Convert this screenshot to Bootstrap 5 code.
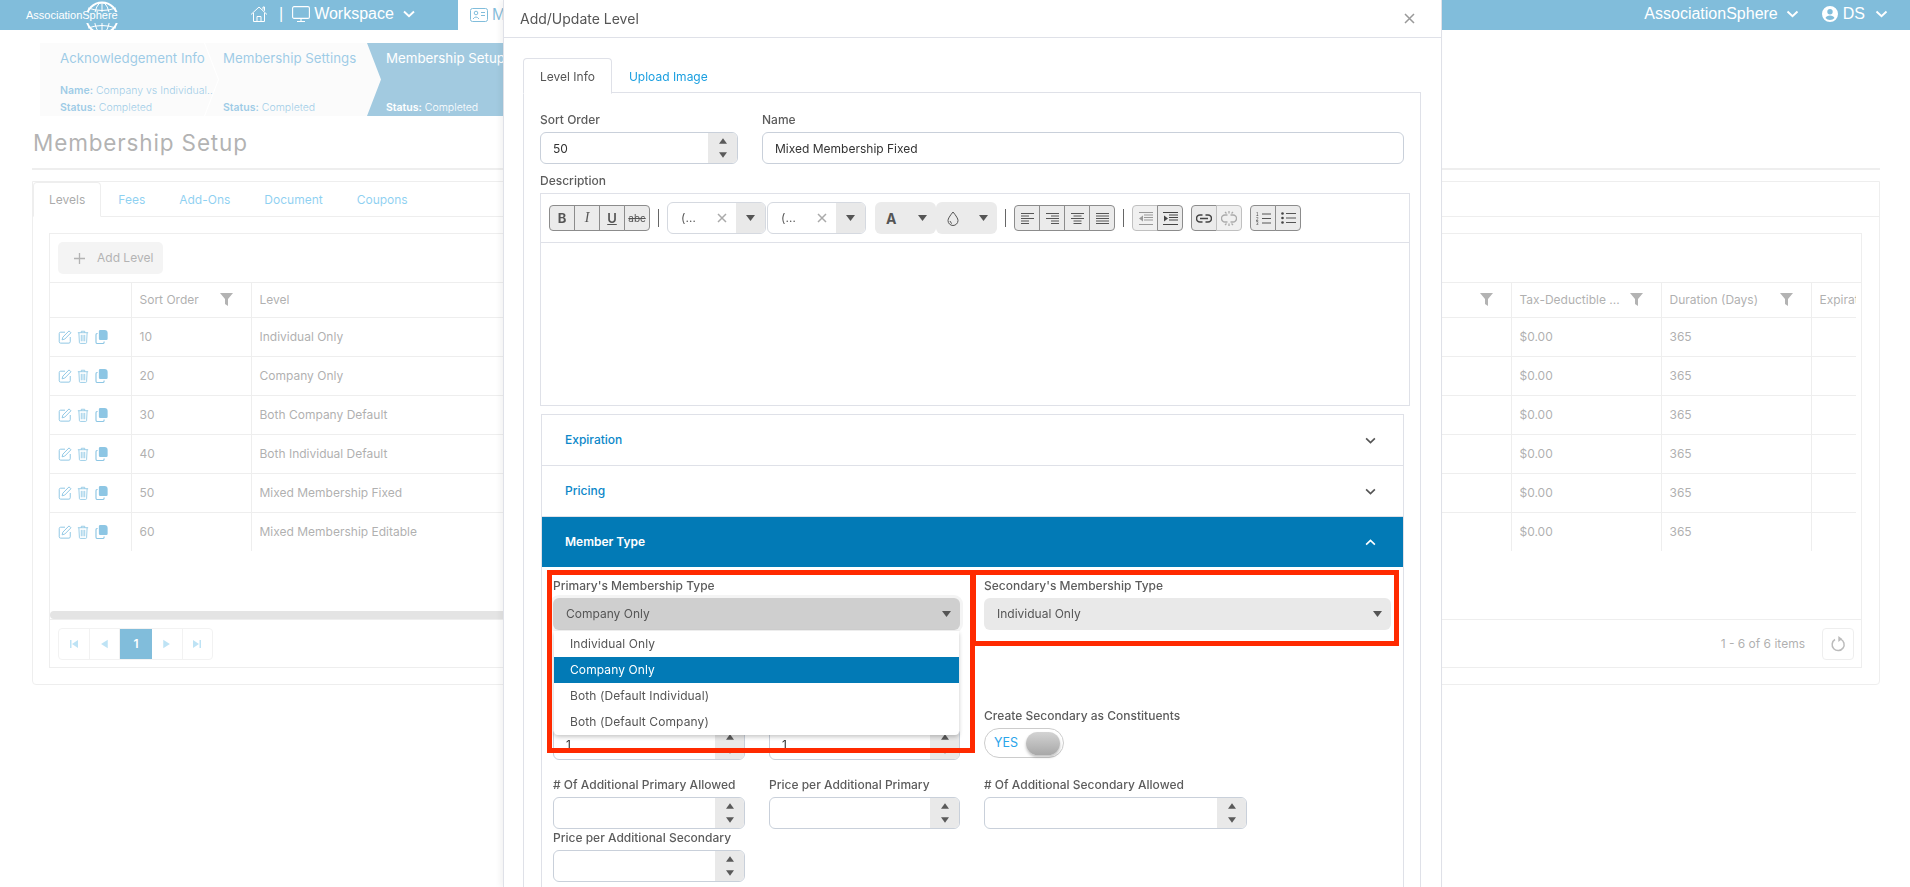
<!DOCTYPE html>
<html lang="en"><head><meta charset="utf-8"><title>Membership Setup</title>
<link href="https://cdn.jsdelivr.net/npm/bootstrap@5.3.0/dist/css/bootstrap.min.css" rel="stylesheet">
<style>
html,body{height:887px;overflow:hidden;background:#fff}
body{font-family:Inter,"Liberation Sans",sans-serif;font-size:12px;color:#555}
.top-bar{height:30px;background:#027ab6;color:#fff;font-family:"Liberation Sans",sans-serif;position:relative;padding-bottom:2px}
.logo-box{width:248px;padding-left:26px;font-size:11px;padding-top:2px}
.nav-big{font-size:16px}
.bar-tab{margin-left:45px;width:300px;height:30px;margin-bottom:-2px;background:#fff;color:#027ab6;padding-left:12px}
.wiz{height:73px;margin:13px 0 0 40px}
.wiz-step{height:73px;width:178px;background:#f7f7f7;padding:7px 0 0 20px;margin-right:-15px;clip-path:polygon(0 0,164px 0,178px 50%,164px 100%,0 100%);color:#3d97cd}
.wiz-step+.wiz-step{width:178px;padding-left:20px;clip-path:polygon(2px 0,164px 0,178px 50%,164px 100%,2px 100%,16px 50%)}
.wiz-step.now{background:#4595c1;color:#fff;width:300px;clip-path:none;margin-right:0;padding-left:20px}
.wiz-head{font-size:13.3px;line-height:17px;height:32px;white-space:nowrap}
.wiz-meta{font-size:10.5px;line-height:17px;white-space:nowrap;font-weight:300}
.wiz-meta b{font-weight:600}
.page-h{font-size:22.5px;letter-spacing:.85px;line-height:27px;margin:13px 0 0 33px;font-weight:400;color:#666}
.h-rule{border-bottom:2px solid #ddd;margin:12px 30px 0 32px;height:0}
.outer{margin:11px 30px 0 32px;height:504px;border:1px solid #ddd;border-radius:0 0 4px 4px}
.outer .nav-tabs{--bs-nav-tabs-border-color:#ddd;height:35px;margin:0;flex-wrap:nowrap}
.outer .nav-link{padding:9px 16px;height:35px;font-size:12px;color:#1ba2e3;border:1px solid transparent;margin:0;line-height:15px}
.outer .nav-link.active{color:#555;border-color:#ddd #ddd #fff;border-radius:4px 4px 0 0;padding:9px 15px}
.grid-box{margin:16px 17px 0 16px;height:435px;border:1px solid #ddd}
.grid-tool{height:49px;padding:8px;border-bottom:1px solid #ddd}
.add-btn{height:32px;background:#e8e8e8;border:0;border-radius:5px;color:#666;font-size:12px;width:105px;padding:0 0 0 16px}
.grid-wrap{height:336px;overflow:hidden;width:1806px;position:relative}
.lvl-table{table-layout:fixed;width:1806px;border-collapse:collapse;margin:0}
.lvl-table th,.lvl-table td{border:1px solid #ddd;border-top:0;border-left:0;padding:0 8px;font-weight:400;font-size:12px;color:#616161;white-space:nowrap;overflow:hidden}
.lvl-table th{height:34px;position:relative}
.lvl-table td{height:39px}
.lvl-table tr:last-child td{border-bottom:0}
.lvl-table th:last-child,.lvl-table td:last-child{border-right:0}
.filt{position:absolute;right:18px;top:10px;width:13px;height:13px;color:#666}
.act svg{color:#1b8dc8;display:inline-block;vertical-align:middle;margin-right:2px}
.thumb{position:absolute;left:0;right:840px;bottom:0;height:8px;background:#c8c8c8;border-radius:4px}
.grid-foot{height:49px;border-top:1px solid #ddd;padding:8px 7px 8px 8px}
.pg{width:155px;height:32px;border:1px solid #e5e5e5;border-radius:4px;overflow:hidden}
.pg span{flex:1;display:flex;align-items:center;justify-content:center;border-right:1px solid #e5e5e5;color:#7dc7eb}
.pg span:last-child{border-right:0}
.pg .on{background:#027ab6;color:#fff;font-weight:600;border:0;flex:0 0 32px}
.refresh{width:32px;height:32px;border:1px solid #ddd;border-radius:4px;color:#777;margin-left:17px}
.veil{position:fixed;inset:0;background:rgba(255,255,255,.5)}
.dlg{position:fixed;left:503px;top:0;width:939px;height:887px;background:#fff;border-left:1px solid #dfe1e8;border-right:1px solid #dfe1e8;box-shadow:-3px 0 6px rgba(0,0,0,.05);overflow:hidden}
.dlg-head{height:38px;border-bottom:1px solid #dfe1e8;padding:0 26px 0 16px;font-size:14px;color:#555}
.dlg-x{color:#999}
.dlg-pane{padding:20px 20px 0 19px}
.dlg-pane .nav-tabs{--bs-nav-tabs-border-color:#dfe1e8;height:35px}
.dlg-pane .nav-link{height:36px;padding:10px 16px;font-size:12px;line-height:15px;color:#1b9fe0;border:1px solid transparent;margin:0}
.dlg-pane .nav-link.active{color:#555;border-color:#dfe1e8 #dfe1e8 #fff;border-radius:4px 4px 0 0}
.pane-box{border:1px solid #dfe1e8;border-top:0;height:800px;padding:19px 11px 0 16px}
.lab{display:block;font-size:12px;line-height:15px;margin:0 0 5px;color:#5c5c5c;white-space:nowrap;font-weight:500}
.num,.txt{height:32px;border:1px solid #c9d0da;border-radius:6px;overflow:hidden;background:#fff}
.num input,.txt input{border:0;height:30px;padding:0 12px;font-size:12px;color:#333;border-radius:0;background:transparent;box-shadow:none}
.spin{flex:0 0 29px;background:#e9e9e9;color:#5a5a5a;gap:8px}
.desc-box{margin-top:5px;height:213px;border:1px solid #dfe1e8;width:870px}
.desc-tool{height:49px;border-bottom:1px solid #dfe1e8;padding:0 0 0 8px}
.tb-group{display:flex}
.tb-btn{width:26px;height:26px;margin-left:-1px;background:#ebebeb;border:1px solid #8c8c8c;color:#555;display:flex;align-items:center;justify-content:center;font-size:12px;line-height:1;font-weight:400}
.tb-btn:first-child{margin-left:0;border-radius:4px 0 0 4px}
.tb-btn:last-child{border-radius:0 4px 4px 0}
.tb-btn.off{color:#aaa;border-color:#c0c0c0;background:#f0f0f0}
.tb-sep{width:1px;height:18px;background:#666;margin:0 8px}
.combo{width:99px;height:32px;border:1px solid #d5d9e0;border-radius:6px;overflow:hidden;background:#fff;padding-left:13px;color:#555}
.combo+.combo{margin-left:1px}
.combo .cx{margin-left:auto;margin-right:9px;color:#aaa}
.combo .cd{width:29px;height:100%;background:#e9e9e9;color:#555}
.colr{width:61px;height:32px;background:#ebebeb;border-radius:6px;color:#555;padding:0 9px 0 11px}
.acc{margin:8px 0 0 1px;width:863px;--bs-accordion-border-color:#dfe1e8;--bs-accordion-border-radius:0;--bs-accordion-inner-border-radius:0}
.acc .accordion-button{height:50px;font-size:12px;font-weight:500;color:#0b87c9;padding:0 0 0 23px;background:#fff;box-shadow:none;border-radius:0}
.acc .accordion-button::after{display:none}
.acc .accordion-button.open-row{background:#027ab6;color:#fff;font-weight:600}
.acc .chev{margin-left:auto;margin-right:27px;color:#555}
.acc .open-row .chev{color:#fff}
.acc .accordion-body{padding:11px 11px 0 11px;height:400px}
.fake-sel{height:32px;border-radius:6px;background:#e9e9e9;padding:0 9px 0 13px;color:#555;font-size:12px}
.fake-sel.focus{background:#cfcfcf;box-shadow:0 0 0 3px #f4f4f4}
.type-menu{top:33px;left:1px;width:405px;padding:0;margin:0;border:0;border-radius:0 0 4px 4px;box-shadow:0 2px 4px rgba(0,0,0,.22);font-size:12px;min-width:0;--bs-dropdown-link-active-bg:#027ab6;z-index:5}
.type-menu .dropdown-item{height:26px;padding:0 16px;line-height:26px;font-size:12px;color:#555;letter-spacing:.1px}
.type-menu .dropdown-item.active{color:#fff;background:#027ab6;height:26px}
.w-a{width:192px}.w-b{width:191px}.w-c{width:263px}.w-half{width:407px}
.yes-sw{width:80px;height:30px;border:1px solid #ccc;border-radius:15px;padding-left:9px;color:#2aa5ea;font-size:12.5px;position:relative;background:#fff;margin-top:1px}
.knob{position:absolute;right:3px;top:3px;width:34px;height:23px;border-radius:12px;background:linear-gradient(#d3d3d3,#a8a8a8);box-shadow:0 2px 3px rgba(0,0,0,.25)}
.mark-box{position:absolute;border:5px solid #ff2a00;z-index:9;pointer-events:none}
.mb-a{left:43px;top:570px;width:428px;height:183px}
.mb-b{left:467px;top:570px;width:428px;height:76px}
</style></head>
<body>
<svg width="0" height="0" class="position-absolute">
<symbol id="i-edit" viewBox="0 0 16 16"><path d="M8 2.500H3A1.600 1.600 0 0 0 1.400 4v9.500A1.600 1.600 0 0 0 3 15h9.500a1.600 1.600 0 0 0 1.500-1.600V8" fill="none" stroke="currentColor" stroke-width="1.100"/><path d="M5.500 8.200 12.600 1l2.200 2.200-7.100 7.200-3 .8z" fill="none" stroke="currentColor" stroke-width="1.100"/></symbol>
<symbol id="i-trash" viewBox="0 0 14 16"><path d="M1 3h12M5 3V1.300h4V3M2.200 3l.6 11.400a1.200 1.200 0 0 0 1.200 1.100h6a1.200 1.200 0 0 0 1.200-1.100L11.800 3M5 5.500v7.500M7 5.500v7.500M9 5.500v7.500" fill="none" stroke="currentColor" stroke-width="1"/></symbol>
<symbol id="i-copy" viewBox="0 0 14 16"><path d="M5.500 0h5a3.500 3.500 0 0 1 3.500 3.500V10a1.500 1.500 0 0 1-1.500 1.500h-7A1.500 1.500 0 0 1 4 10V1.500A1.500 1.500 0 0 1 5.500 0z" fill="currentColor"/><path d="M2.500 4H2A1.500 1.500 0 0 0 .7 5.500V14A1.500 1.500 0 0 0 2 15.400h6.500A1.500 1.500 0 0 0 10 14v-.8" fill="none" stroke="currentColor" stroke-width="1.300"/></symbol>
<symbol id="i-filter" viewBox="0 0 13 13"><path d="M0 0h13L8 6v7L5 11V6z" fill="currentColor"/></symbol>
<symbol id="i-chev" viewBox="0 0 12 8"><path d="M1 1.500 6 6.300l5-4.800" fill="none" stroke="currentColor" stroke-width="1.900"/></symbol>
<symbol id="i-up" viewBox="0 0 9 6"><path d="M4.500 0 9 6H0z" fill="currentColor"/></symbol>
<symbol id="i-dn" viewBox="0 0 9 6"><path d="M0 0h9L4.500 6z" fill="currentColor"/></symbol>
<symbol id="i-left" viewBox="0 0 12 12"><path d="M2 2h1.500v8H2zM10 2v8L4 6z" fill="currentColor"/></symbol>
<symbol id="i-right" viewBox="0 0 12 12"><path d="M10 2H8.500v8H10zM2 2v8l6-4z" fill="currentColor"/></symbol>
</svg>

<div class="top-bar d-flex align-items-center">
  <div class="logo-box position-relative flex-shrink-0">AssociationSphere
    <svg class="position-absolute" style="left:85px;top:-5px" width="34" height="36" viewBox="0 0 34 36" fill="none" stroke="#fff" stroke-width="1"><clipPath id="gl"><path d="M0 0h34v12H0zM0 23h34v13H0z"/></clipPath><g clip-path="url(#gl)"><circle cx="17" cy="18" r="15.500" stroke-width="2"/><ellipse cx="17" cy="18" rx="7.500" ry="15.500"/><path d="M17 2v32M3 8q14 5 28 0M3 28q14-5 28 0"/></g></svg>
  </div>
  <svg style="margin-left:2px" width="18" height="18" viewBox="0 0 18 18" fill="none" stroke="#fff" stroke-width="1"><path d="M1 9.500 9 2l8 7.500M3.500 8v8.500h11V8M7 16.500v-5h4v5M13 4.500V2h1.500v3.800"/></svg>
  <span class="nav-big" style="margin:0 9px 0 11px">|</span>
  <svg width="18" height="17" viewBox="0 0 18 17" fill="none" stroke="#fff" stroke-width="1.100"><rect x=".6" y=".6" width="16.800" height="11.800" rx="1.500"/><path d="M9 12.500v3M5 15.500h8"/></svg>
  <span class="nav-big ms-1">Workspace</span>
  <svg width="12" height="8" style="margin-left:9px"><use href="#i-chev"/></svg>
  <div class="bar-tab d-flex align-items-center nav-big" style="margin-left:43px">
    <svg width="18" height="14" viewBox="0 0 18 14" fill="none" stroke="#027ab6"><rect x=".5" y=".5" width="17" height="13" rx="2"/><circle cx="6" cy="5" r="1.800"/><path d="M3 11q3-4 6 0M11 4.500h4M11 7.500h4"/></svg><span class="ms-1">M</span>
  </div>
  <div class="ms-auto d-flex align-items-center" style="padding-right:22px">
    <span class="nav-big">AssociationSphere</span>
    <svg class="ms-2" width="13" height="8"><use href="#i-chev"/></svg>
    <svg style="margin-left:23px" width="16" height="16" viewBox="0 0 16 16"><path fill="#fff" fill-rule="evenodd" d="M8 0a8 8 0 1 1 0 16A8 8 0 0 1 8 0zm0 3a2.700 2.700 0 1 0 0 5.400A2.700 2.700 0 0 0 8 3zm0 6.500c-2.200 0-4 .9-4.500 2.400a6 6 0 0 0 9 0C12 10.400 10.200 9.500 8 9.500z"/></svg>
    <span class="nav-big" style="margin-left:5px">DS</span>
    <svg style="margin-left:10px" width="13" height="8"><use href="#i-chev"/></svg>
  </div>
</div>

<div class="wiz d-flex">
  <div class="wiz-step"><div class="wiz-head">Acknowledgement Info</div><div class="wiz-meta"><b>Name:</b> Company vs Individual…</div><div class="wiz-meta"><b>Status:</b> Completed</div></div>
  <div class="wiz-step"><div class="wiz-head">Membership Settings</div><div class="wiz-meta">&nbsp;</div><div class="wiz-meta"><b>Status:</b> Completed</div></div>
  <div class="wiz-step now"><div class="wiz-head">Membership Setup</div><div class="wiz-meta">&nbsp;</div><div class="wiz-meta"><b>Status:</b> Completed</div></div>
</div>
<h1 class="page-h">Membership Setup</h1>
<div class="h-rule"></div>
<div class="outer">
  <ul class="nav nav-tabs">
    <li class="nav-item"><a class="nav-link active" href="#">Levels</a></li>
    <li class="nav-item"><a class="nav-link" href="#">Fees</a></li>
    <li class="nav-item"><a class="nav-link" href="#">Add-Ons</a></li>
    <li class="nav-item"><a class="nav-link" href="#">Document</a></li>
    <li class="nav-item"><a class="nav-link" href="#">Coupons</a></li>
  </ul>
  <div class="grid-box">
    <div class="grid-tool"><button class="add-btn d-flex align-items-center gap-2" type="button"><svg width="11" height="11" viewBox="0 0 11 11"><path d="M5.500 0v11M0 5.500h11" stroke="#666" stroke-width="1.300"/></svg><span class="ms-1">Add Level</span></button></div>
    <div class="grid-wrap">
      <table class="lvl-table">
        <colgroup><col style="width:81px"><col style="width:120px"><col style="width:1110px"><col style="width:150px"><col style="width:150px"><col style="width:150px"><col style="width:45px"></colgroup>
        <thead><tr><th></th><th>Sort Order<svg class="filt"><use href="#i-filter"/></svg></th><th>Level</th><th><svg class="filt"><use href="#i-filter"/></svg></th><th>Tax-Deductible ...<svg class="filt"><use href="#i-filter"/></svg></th><th>Duration (Days)<svg class="filt"><use href="#i-filter"/></svg></th><th>Expiration</th></tr></thead>
        <tbody>
          <tr><td class="act"><svg width="14" height="14"><use href="#i-edit"/></svg> <svg width="12" height="14"><use href="#i-trash"/></svg> <svg width="13" height="14"><use href="#i-copy"/></svg></td><td>10</td><td>Individual Only</td><td></td><td>$0.00</td><td>365</td><td></td></tr>
          <tr><td class="act"><svg width="14" height="14"><use href="#i-edit"/></svg> <svg width="12" height="14"><use href="#i-trash"/></svg> <svg width="13" height="14"><use href="#i-copy"/></svg></td><td>20</td><td>Company Only</td><td></td><td>$0.00</td><td>365</td><td></td></tr>
          <tr><td class="act"><svg width="14" height="14"><use href="#i-edit"/></svg> <svg width="12" height="14"><use href="#i-trash"/></svg> <svg width="13" height="14"><use href="#i-copy"/></svg></td><td>30</td><td>Both Company Default</td><td></td><td>$0.00</td><td>365</td><td></td></tr>
          <tr><td class="act"><svg width="14" height="14"><use href="#i-edit"/></svg> <svg width="12" height="14"><use href="#i-trash"/></svg> <svg width="13" height="14"><use href="#i-copy"/></svg></td><td>40</td><td>Both Individual Default</td><td></td><td>$0.00</td><td>365</td><td></td></tr>
          <tr><td class="act"><svg width="14" height="14"><use href="#i-edit"/></svg> <svg width="12" height="14"><use href="#i-trash"/></svg> <svg width="13" height="14"><use href="#i-copy"/></svg></td><td>50</td><td>Mixed Membership Fixed</td><td></td><td>$0.00</td><td>365</td><td></td></tr>
          <tr><td class="act"><svg width="14" height="14"><use href="#i-edit"/></svg> <svg width="12" height="14"><use href="#i-trash"/></svg> <svg width="13" height="14"><use href="#i-copy"/></svg></td><td>60</td><td>Mixed Membership Editable</td><td></td><td>$0.00</td><td>365</td><td></td></tr>
        </tbody>
      </table>
      <div class="thumb"></div>
    </div>
    <div class="grid-foot d-flex align-items-center">
      <div class="pg d-flex"><span><svg width="12" height="12"><use href="#i-left"/></svg></span><span><svg width="8" height="10" viewBox="0 0 9 12"><path d="M9 1v10L1 6z" fill="currentColor"/></svg></span><span class="on">1</span><span><svg width="8" height="10" viewBox="0 0 9 12"><path d="M0 1v10l8-5z" fill="currentColor"/></svg></span><span><svg width="12" height="12"><use href="#i-right"/></svg></span></div>
      <span class="ms-auto" style="color:#616161">1 - 6 of 6 items</span>
      <div class="refresh d-flex align-items-center justify-content-center"><svg width="15" height="16" viewBox="0 0 15 16" fill="none" stroke="currentColor" stroke-width="1.500"><path d="M9.500 3.100A6 6 0 1 1 4 3.500"/><path d="M7.300 0v6l4-3z" fill="currentColor" stroke="none"/></svg></div>
    </div>
  </div>
</div>

<div class="veil"></div>

<div class="dlg">
  <div class="dlg-head d-flex align-items-center"><span>Add/Update Level</span><svg class="ms-auto dlg-x" width="11" height="11" viewBox="0 0 11 11"><path d="M1 1l9 9M10 1l-9 9" stroke="currentColor" stroke-width="1.500"/></svg></div>
  <div class="dlg-pane">
    <ul class="nav nav-tabs">
      <li class="nav-item"><a class="nav-link active" href="#">Level Info</a></li>
      <li class="nav-item"><a class="nav-link" href="#">Upload Image</a></li>
    </ul>
    <div class="pane-box">
      <div class="d-flex" style="gap:24px">
        <div style="width:198px"><label class="lab">Sort Order</label>
          <div class="num d-flex"><input class="form-control" value="50"><div class="spin d-flex flex-column align-items-center justify-content-center"><svg width="8" height="6"><use href="#i-up"/></svg><svg width="8" height="6"><use href="#i-dn"/></svg></div></div></div>
        <div style="width:642px"><label class="lab">Name</label>
          <div class="txt"><input class="form-control" value="Mixed Membership Fixed"></div></div>
      </div>
      <label class="lab" style="margin:9px 0 0">Description</label>
      <div class="desc-box">
        <div class="desc-tool d-flex align-items-center">
          <div class="tb-group"><span class="tb-btn" style="font-weight:700;font-size:13px">B</span><span class="tb-btn" style="font-style:italic;font-family:'Liberation Serif',serif;font-size:14px">I</span><span class="tb-btn text-decoration-underline" style="font-weight:600;font-size:13px">U</span><span class="tb-btn text-decoration-line-through" style="font-size:10px">abc</span></div>
          <div class="tb-sep"></div>
          <div class="combo d-flex align-items-center"><span>(…</span><svg class="cx" width="10" height="10" viewBox="0 0 10 10"><path d="M1 1l8 8M9 1 1 9" stroke="currentColor" stroke-width="1.500"/></svg><span class="cd d-flex align-items-center justify-content-center"><svg width="9" height="6"><use href="#i-dn"/></svg></span></div>
          <div class="combo d-flex align-items-center"><span>(…</span><svg class="cx" width="10" height="10" viewBox="0 0 10 10"><path d="M1 1l8 8M9 1 1 9" stroke="currentColor" stroke-width="1.500"/></svg><span class="cd d-flex align-items-center justify-content-center"><svg width="9" height="6"><use href="#i-dn"/></svg></span></div>
          <div class="colr d-flex align-items-center justify-content-between" style="margin-left:9px"><b style="font-size:14px">A</b><svg width="9" height="6"><use href="#i-dn"/></svg></div>
          <div class="colr d-flex align-items-center justify-content-between"><svg width="12" height="15" viewBox="0 0 12 15" fill="none" stroke="#555"><path d="M6 1Q1 7 1 9.500a5 5 0 0 0 10 0Q11 7 6 1z"/><path d="M3 10q.5 2 2 2.500"/></svg><svg width="9" height="6"><use href="#i-dn"/></svg></div>
          <div class="tb-sep"></div>
          <div class="tb-group">
            <span class="tb-btn"><svg width="13" height="12" stroke="#555"><path d="M0 1.500h13M0 4h8M0 6.500h13M0 9h8M0 11.500h8"/></svg></span>
            <span class="tb-btn"><svg width="13" height="12" stroke="#555"><path d="M0 1.500h13M5 4h8M0 6.500h13M5 9h8M5 11.500h8"/></svg></span>
            <span class="tb-btn"><svg width="13" height="12" stroke="#555"><path d="M0 1.500h13M2.500 4h8M0 6.500h13M2.500 9h8M2.500 11.500h8"/></svg></span>
            <span class="tb-btn"><svg width="13" height="12" stroke="#555"><path d="M0 1.500h13M0 4h13M0 6.500h13M0 9h13M0 11.500h13"/></svg></span>
          </div>
          <div class="tb-sep"></div>
          <div class="tb-group">
            <span class="tb-btn off"><svg width="15" height="13" stroke="#999"><path d="M1 .5h14M6 3h9M6 5.500h9M6 8h9M1 12.500h14"/><path d="M5 3.500v6L1 6.500z" fill="#999" stroke="none"/></svg></span>
            <span class="tb-btn"><svg width="15" height="13" stroke="#444"><path d="M0 .5h15M6 3h9M6 5.500h9M6 8h9M0 12.500h15"/><path d="M1 3.500v6l4-3z" fill="#444" stroke="none"/></svg></span>
          </div>
          <div class="tb-group" style="margin-left:8px">
            <span class="tb-btn"><svg width="16" height="9" viewBox="0 0 16 9" fill="none" stroke="#444" stroke-width="1.600"><path d="M6.500 1H4a3.500 3.500 0 0 0 0 7h2.500M9.500 1H12a3.500 3.500 0 0 1 0 7H9.500M4 4.500h8"/></svg></span>
            <span class="tb-btn off"><svg width="16" height="15" viewBox="0 0 16 15" fill="none" stroke="#aaa" stroke-width="1.300"><path d="M6.500 4H4a3.500 3.500 0 0 0 0 7h2.500M9.500 4H12a3.500 3.500 0 0 1 0 7H9.500M8 0v2.500M8 12.500V15M4 1l1.500 1.500M12 1l-1.500 1.500M4 14l1.500-1.500M12 14l-1.500-1.500"/></svg></span>
          </div>
          <div class="tb-group" style="margin-left:8px">
            <span class="tb-btn"><svg width="15" height="13" stroke="#555"><path d="M6 2h9M6 6.500h9M6 11h9"/><text x="0" y="4" font-size="4.500" fill="#444" stroke="none" font-family="Liberation Sans">1</text><text x="0" y="8.500" font-size="4.500" fill="#444" stroke="none" font-family="Liberation Sans">2</text><text x="0" y="13" font-size="4.500" fill="#444" stroke="none" font-family="Liberation Sans">3</text></svg></span>
            <span class="tb-btn"><svg width="15" height="12" stroke="#555"><path d="M5 1.500h10M5 6h10M5 10.500h10"/><circle cx="1.500" cy="1.500" r="1.300" fill="#444" stroke="none"/><circle cx="1.500" cy="6" r="1.300" fill="#444" stroke="none"/><circle cx="1.500" cy="10.500" r="1.300" fill="#444" stroke="none"/></svg></span>
          </div>
        </div>
      </div>

      <div class="accordion acc">
        <div class="accordion-item"><div class="accordion-header"><button class="accordion-button collapsed" type="button">Expiration<svg class="chev" width="11" height="7"><use href="#i-chev"/></svg></button></div></div>
        <div class="accordion-item"><div class="accordion-header"><button class="accordion-button collapsed" type="button">Pricing<svg class="chev" width="11" height="7"><use href="#i-chev"/></svg></button></div></div>
        <div class="accordion-item"><div class="accordion-header"><button class="accordion-button open-row" type="button">Member Type<svg class="chev" width="11" height="7" style="transform:scaleY(-1)"><use href="#i-chev"/></svg></button></div>
          <div class="accordion-body">
            <div class="d-flex" style="gap:24px">
              <div class="w-half position-relative"><label class="lab">Primary's Membership Type</label>
                <div class="position-relative"><div class="fake-sel focus d-flex align-items-center justify-content-between"><span>Company Only</span><svg width="9" height="6"><use href="#i-dn"/></svg></div>
                  <ul class="dropdown-menu show type-menu">
                    <li><a class="dropdown-item" href="#">Individual Only</a></li>
                    <li><a class="dropdown-item active" href="#">Company Only</a></li>
                    <li><a class="dropdown-item" href="#">Both (Default Individual)</a></li>
                    <li><a class="dropdown-item" href="#">Both (Default Company)</a></li>
                  </ul></div></div>
              <div class="w-half"><label class="lab">Secondary's Membership Type</label>
                <div class="fake-sel d-flex align-items-center justify-content-between"><span>Individual Only</span><svg width="9" height="6"><use href="#i-dn"/></svg></div></div>
            </div>
            <div class="d-flex" style="gap:24px;margin-top:78px">
              <div class="w-a"><label class="lab">&nbsp;</label><div class="num d-flex"><input class="form-control" value="1"><div class="spin d-flex flex-column align-items-center justify-content-center"><svg width="8" height="6"><use href="#i-up"/></svg><svg width="8" height="6"><use href="#i-dn"/></svg></div></div></div>
              <div class="w-b"><label class="lab">&nbsp;</label><div class="num d-flex"><input class="form-control" value="1"><div class="spin d-flex flex-column align-items-center justify-content-center"><svg width="8" height="6"><use href="#i-up"/></svg><svg width="8" height="6"><use href="#i-dn"/></svg></div></div></div>
              <div><label class="lab">Create Secondary as Constituents</label><div class="yes-sw d-flex align-items-center">YES<span class="knob"></span></div></div>
            </div>
            <div class="d-flex" style="gap:24px;margin-top:17px">
              <div class="w-a"><label class="lab"># Of Additional Primary Allowed</label><div class="num d-flex"><input class="form-control"><div class="spin d-flex flex-column align-items-center justify-content-center"><svg width="8" height="6"><use href="#i-up"/></svg><svg width="8" height="6"><use href="#i-dn"/></svg></div></div></div>
              <div class="w-b"><label class="lab">Price per Additional Primary</label><div class="num d-flex"><input class="form-control"><div class="spin d-flex flex-column align-items-center justify-content-center"><svg width="8" height="6"><use href="#i-up"/></svg><svg width="8" height="6"><use href="#i-dn"/></svg></div></div></div>
              <div class="w-c"><label class="lab"># Of Additional Secondary Allowed</label><div class="num d-flex"><input class="form-control"><div class="spin d-flex flex-column align-items-center justify-content-center"><svg width="8" height="6"><use href="#i-up"/></svg><svg width="8" height="6"><use href="#i-dn"/></svg></div></div></div>
            </div>
            <div class="w-a" style="margin-top:1px"><label class="lab">Price per Additional Secondary</label><div class="num d-flex"><input class="form-control"><div class="spin d-flex flex-column align-items-center justify-content-center"><svg width="8" height="6"><use href="#i-up"/></svg><svg width="8" height="6"><use href="#i-dn"/></svg></div></div></div>
          </div>
        </div>
      </div>
    </div>
  </div>
  <div class="mark-box mb-a"></div>
  <div class="mark-box mb-b"></div>
</div>
<script src="https://cdn.jsdelivr.net/npm/bootstrap@5.3.0/dist/js/bootstrap.bundle.min.js"></script>
</body></html>
